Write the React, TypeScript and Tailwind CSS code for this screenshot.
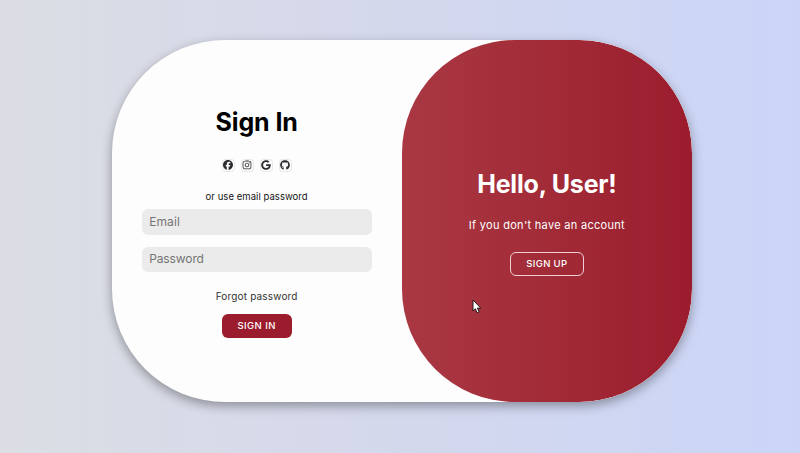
import { FaFacebook, FaGithub, FaGoogle, FaInstagram } from "react-icons/fa6";

const socials = [
  { name: "Facebook", Icon: FaFacebook },
  { name: "Instagram", Icon: FaInstagram },
  { name: "Google", Icon: FaGoogle },
  { name: "GitHub", Icon: FaGithub },
];

function SignInForm() {
  return (
    <form className="flex w-1/2 flex-col items-center px-[30.5px] pt-[67px]">
      <h1 className="h-[30px] text-[25px] leading-[30px] font-bold tracking-[-0.1px] whitespace-nowrap text-black">Sign In</h1>
      <div className="mt-[22px] flex gap-[6px]">
        {socials.map(({ name, Icon }) => (
          <a
            key={name}
            aria-label={name}
            className="flex size-[13px] items-center justify-center rounded-[3.5px] border border-[#e9e7e9] text-[#2b2b30]"
          >
            <Icon className="size-[10px] shrink-0" />
          </a>
        ))}
      </div>
      <span className="mt-[18px] h-[14px] text-[9.5px] leading-[14px] tracking-[0.05px] whitespace-nowrap text-[#151515]">
        or use email password
      </span>
      <input
        type="email"
        placeholder="Email"
        className="mt-[5.5px] h-[25.5px] w-[230px] rounded-[6px] bg-[#ebebeb] px-[7.5px] text-[12px] tracking-[0.1px] outline-none placeholder:text-[#757575]"
      />
      <input
        type="password"
        placeholder="Password"
        className="mt-[12px] h-[25px] w-[230px] rounded-[6px] bg-[#ebebeb] px-[7.5px] pb-px text-[12px] tracking-[-0.1px] outline-none placeholder:text-[#757575]"
      />
      <a className="mt-[17.5px] h-[14px] text-[10px] leading-[14px] tracking-[0.17px] whitespace-nowrap text-[#333333]">
        Forgot password
      </a>
      <button
        type="button"
        className="mt-[11px] h-[23.5px] w-[70px] rounded-[6px] bg-[#9b1c2d] pt-px text-[9.5px] font-medium tracking-[0.45px] whitespace-nowrap text-white"
      >
        SIGN IN
      </button>
    </form>
  );
}

function WelcomePanel() {
  return (
    <section className="flex w-1/2 flex-col items-center rounded-[113px] bg-linear-to-r from-[#a93843] to-[#9b1c2d] pt-[129px] text-white">
      <h1 className="h-[30px] text-[25px] leading-[30px] font-bold tracking-[-0.2px] whitespace-nowrap">Hello, User!</h1>
      <p className="mt-[18px] h-[16px] text-[11px] leading-[16px] tracking-[0.3px] whitespace-nowrap">
        If you don't have an account
      </p>
      <button
        type="button"
        className="mt-[19.5px] h-[23.5px] w-[74px] rounded-[6px] border border-[#ecd0d5] pt-px text-[9.5px] font-medium tracking-[0.35px] whitespace-nowrap"
      >
        SIGN UP
      </button>
    </section>
  );
}

export default function App() {
  return (
    <main className="relative flex h-[453px] w-[800px] justify-center overflow-hidden bg-linear-to-r from-[#dcdee4] via-[#d4d8ec] to-[#cad5f8] pt-[39.5px] pl-[3.5px] font-['Inter','Open_Sans',sans-serif]">
      <div className="flex h-[362.5px] w-[580.5px] overflow-hidden rounded-[113px] bg-[#fdfdfd] shadow-[0_4px_11px_rgba(0,0,0,0.35)]">
        <SignInForm />
        <WelcomePanel />
      </div>
      <svg className="absolute top-[299px] left-[472px] h-[15px] w-[10px]" viewBox="0 0 10 15" aria-hidden="true">
        <path d="M1 1v11l2.4-2.2 1.7 4 2-.9-1.7-3.8H8.8z" fill="#fff" stroke="#25191d" strokeWidth="1" strokeLinejoin="round" />
      </svg>
    </main>
  );
}
